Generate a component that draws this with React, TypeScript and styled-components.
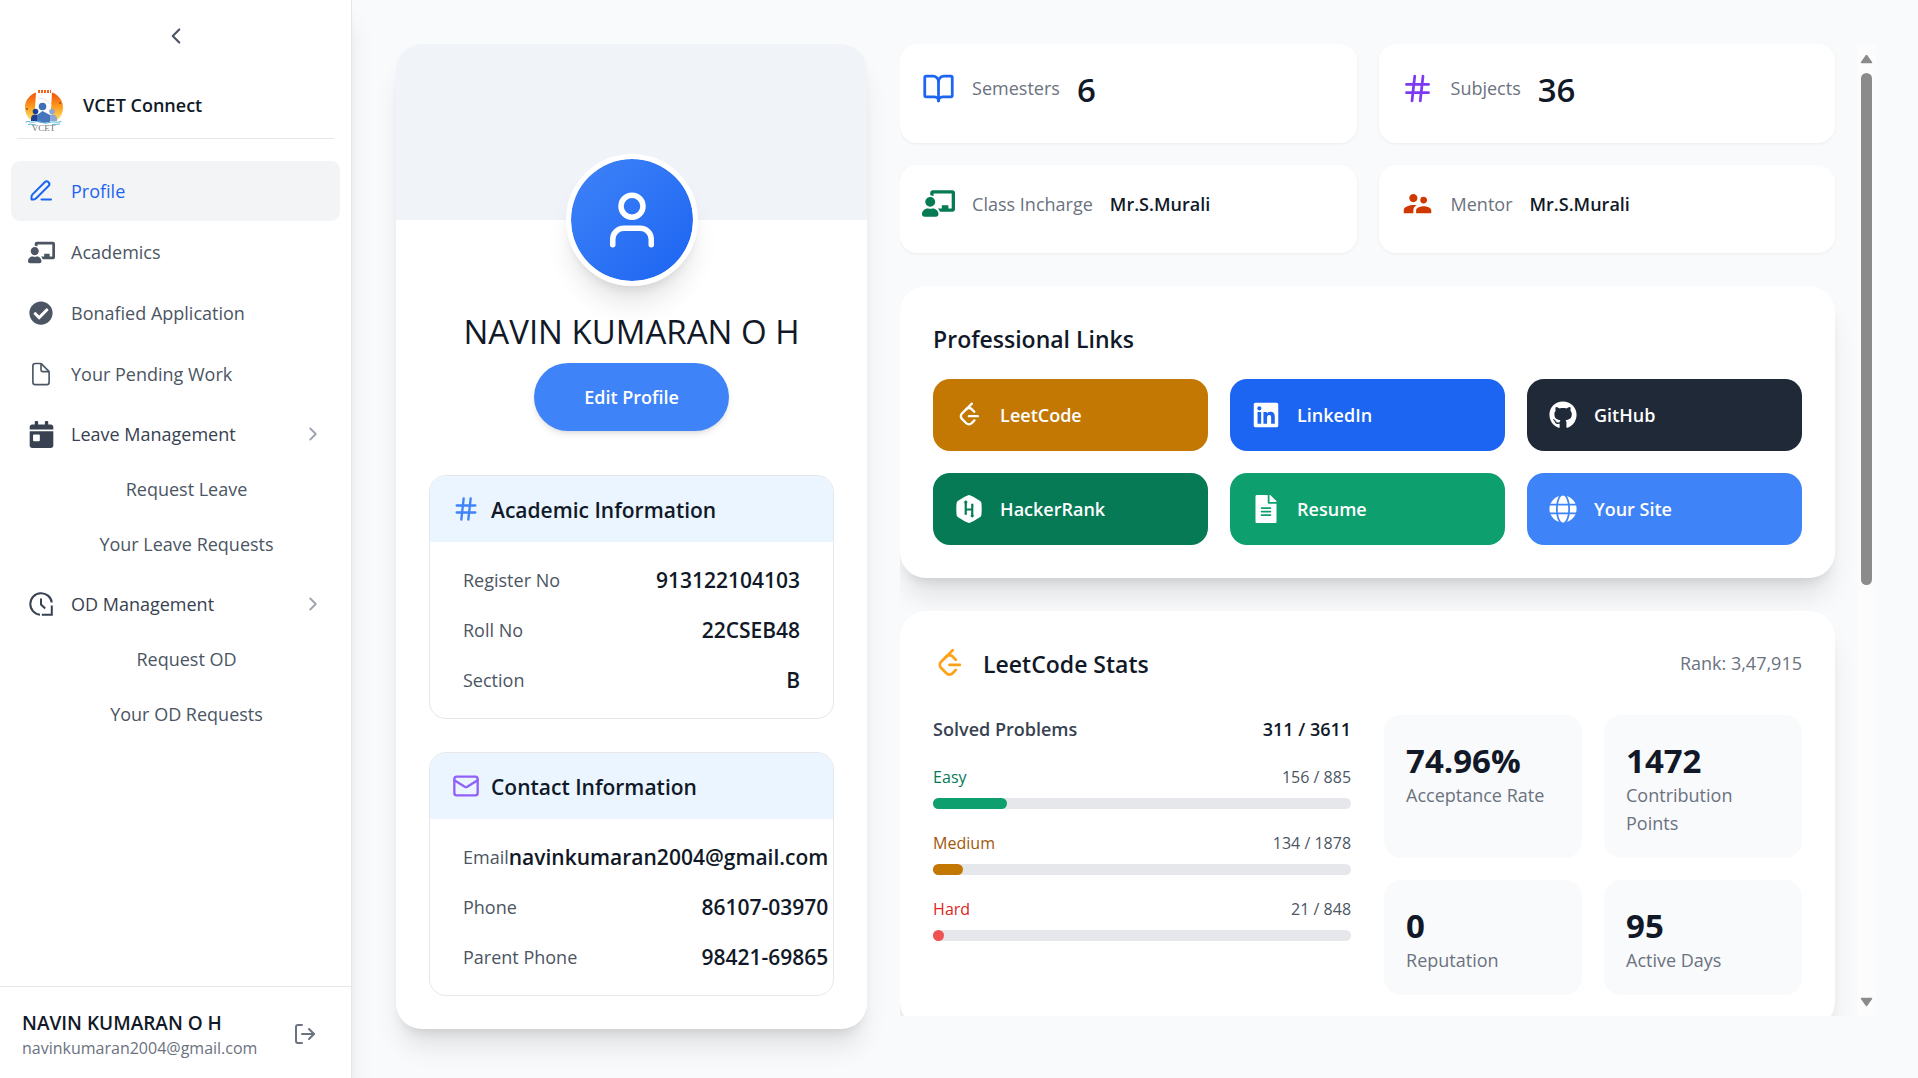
import React from "react";
import styled, { createGlobalStyle } from "styled-components";
import {
  BookOpen,
  ChevronLeft,
  ChevronRight,
  Hash,
  LogOut,
  Mail,
  User,
} from "lucide-react";
import {
  FaCalendarDay,
  FaChalkboardTeacher,
  FaCheckCircle,
  FaFileAlt,
  FaGithub,
  FaGlobe,
  FaHackerrank,
  FaLinkedin,
} from "react-icons/fa";
import { IoDocumentOutline } from "react-icons/io5";
import { MdSupervisorAccount } from "react-icons/md";
import { TbBrandLeetcode } from "react-icons/tb";

const color = {
  page: "#f9fafc",
  white: "#ffffff",
  banner: "#f0f4f9",
  ink: "#111928",
  gray700: "#374151",
  gray600: "#4b5563",
  gray500: "#6b7280",
  gray400: "#9ca3af",
  gray200: "#e5e7eb",
  gray100: "#f3f4f6",
  blue50: "#ebf5ff",
  blue500: "#3f83f8",
  blue600: "#1c64f2",
};

const shadow = {
  sm: "0 1px 3px rgba(0, 0, 0, 0.06)",
  md: "0 4px 7px -1px rgba(0, 0, 0, 0.1), 0 2px 4px -2px rgba(0, 0, 0, 0.1)",
  xl: "0 22px 27px -5px rgba(0, 0, 0, 0.1), 0 9px 11px -6px rgba(0, 0, 0, 0.1)",
};

const GlobalStyle = createGlobalStyle`
  *, *::before, *::after { box-sizing: border-box; }
  body {
    margin: 0;
    background: ${color.page};
    color: ${color.ink};
    font-family: "Segoe UI", "Open Sans", "Noto Sans", sans-serif;
    font-size: 18px;
    line-height: 28px;
  }
  h1, h2, h3, p, ul, dl, dd { margin: 0; padding: 0; }
  ul { list-style: none; }
  a { color: inherit; text-decoration: none; }
  button {
    border: 0;
    padding: 0;
    background: none;
    color: inherit;
    font: inherit;
    cursor: pointer;
  }
  svg { flex: none; display: block; }
`;

const Shell = styled.div`
  display: flex;
  height: 100vh;
  overflow: hidden;
`;

/* ---------- Sidebar ---------- */

const Sidebar = styled.aside`
  display: flex;
  flex-direction: column;
  flex: none;
  width: 352px;
  background: ${color.white};
  border-right: 1px solid ${color.gray200};
  box-shadow: ${shadow.xl};
`;

const CollapseButton = styled.button`
  align-self: center;
  margin: 23px 0 34px;
  color: ${color.gray600};
`;

const Brand = styled.div`
  display: flex;
  align-items: center;
  gap: 17px;
  height: 56px;
  margin: 0 17px;
  padding: 0 5px;
  border-bottom: 1px solid ${color.gray200};
`;

const BrandName = styled.span`
  padding-bottom: 12px;
  font-weight: 600;
`;

const Nav = styled.nav`
  flex: 1;
  padding: 22px 11px 0;
`;

const NavList = styled.ul`
  display: grid;
  gap: 1px;
`;

const NavIcon = styled.span`
  display: grid;
  place-items: center;
  flex: none;
  width: 26px;
  height: 26px;
`;

const NavLink = styled.a<{ $active?: boolean }>`
  display: flex;
  align-items: center;
  gap: 17px;
  height: 60px;
  padding: 0 17px;
  border-radius: 9px;
  background: ${(p) => (p.$active ? color.gray100 : "transparent")};
  color: ${(p) => (p.$active ? color.blue600 : color.gray600)};
`;

const GroupButton = styled.button`
  display: flex;
  align-items: center;
  gap: 17px;
  width: 100%;
  height: 60px;
  padding: 0 16px 0 17px;
  color: ${color.gray700};
  text-align: left;
`;

const GroupLabel = styled.span`
  flex: 1;
`;

const SubList = styled.ul`
  padding-left: 22px;
`;

const SubLink = styled.a`
  display: flex;
  align-items: center;
  justify-content: center;
  height: 50px;
  margin-bottom: 5px;
  color: ${color.gray600};
`;

const Account = styled.footer`
  display: flex;
  align-items: center;
  justify-content: space-between;
  height: 92px;
  padding: 2px 34px 0 22px;
  border-top: 1px solid ${color.gray200};
`;

const AccountText = styled.div`
  padding-top: 4px;
`;

const AccountName = styled.p`
  font-size: 19px;
  line-height: 25px;
  font-weight: 600;
`;

const AccountEmail = styled.p`
  font-size: 16px;
  line-height: 24px;
  color: ${color.gray500};
`;

const IconButton = styled.button`
  color: ${color.gray500};
`;

/* ---------- Main ---------- */

const Main = styled.main`
  display: grid;
  grid-template-columns: minmax(0, 14fr) minmax(0, 29fr);
  align-items: start;
  gap: 33px;
  flex: 1;
  min-width: 0;
  padding: 44px 42px 44px 44px;
`;

const Card = styled.section`
  background: ${color.white};
  border-radius: 26px;
  box-shadow: ${shadow.xl};
`;

const ProfileCard = styled(Card)`
  padding-bottom: 33px;
`;

const Banner = styled.div`
  height: 176px;
  border-radius: 26px 26px 0 0;
  background: ${color.banner};
`;

const Identity = styled.div`
  display: flex;
  flex-direction: column;
  align-items: center;
  margin-top: -66px;
`;

const Avatar = styled.div`
  display: grid;
  place-items: center;
  width: 132px;
  height: 132px;
  border: 5px solid ${color.white};
  border-radius: 50%;
  background: linear-gradient(135deg, ${color.blue500}, ${color.blue600}) padding-box;
  color: ${color.white};
  box-shadow: ${shadow.xl};
`;

const ProfileName = styled.h1`
  margin-top: 23px;
  font-size: 33px;
  line-height: 46px;
  font-weight: 400;
`;

const EditButton = styled.button`
  margin-top: 8px;
  padding: 20px 50px;
  border-radius: 34px;
  background: ${color.blue500};
  color: ${color.white};
  font-weight: 600;
  box-shadow: ${shadow.md};
`;

const InfoList = styled.div`
  display: grid;
  grid-template-columns: minmax(0, 1fr);
  gap: 33px;
  padding: 44px 33px 0;
`;

const InfoCard = styled.section`
  overflow: hidden;
  border: 1px solid ${color.gray200};
  border-radius: 17px;
`;

const InfoHeader = styled.header<{ $tint: string }>`
  display: flex;
  align-items: center;
  gap: 11px;
  height: 66px;
  padding: 0 22px;
  background: ${color.blue50};

  svg {
    color: ${(p) => p.$tint};
  }
`;

const InfoTitle = styled.h2`
  padding-top: 2px;
  font-size: 21px;
  font-weight: 600;
`;

const InfoRows = styled.dl`
  display: grid;
  gap: 17px;
  padding: 22px 33px 21px;
`;

const InfoRow = styled.div`
  display: flex;
  align-items: center;
  justify-content: space-between;
  line-height: 33px;
`;

const InfoTerm = styled.dt`
  color: ${color.gray600};
  white-space: nowrap;
`;

const InfoValue = styled.dd`
  font-size: 21px;
  font-weight: 600;
  white-space: nowrap;
`;

/* ---------- Scrolling column ---------- */

const ScrollArea = styled.div`
  display: flex;
  height: calc(100vh - 106px);
`;

const ScrollContent = styled.div`
  display: flex;
  flex-direction: column;
  gap: 33px;
  flex: 1;
  min-width: 0;
  padding-right: 22px;
  overflow-y: auto;
  scrollbar-width: none;

  > * {
    flex: none;
  }
`;

const ScrollTrack = styled.div`
  display: flex;
  flex-direction: column;
  align-items: center;
  justify-content: space-between;
  flex: none;
  width: 19px;
  padding: 10px 0 9px;
  background: #fcfcfc;
  color: #8b8b8b;
`;

const ScrollRail = styled.div`
  flex: 1;
  width: 11px;
  margin: 9px 0;
`;

const ScrollThumb = styled.div`
  height: 56%;
  border-radius: 6px;
  background: currentColor;
`;

const StatGrid = styled.div`
  display: grid;
  grid-template-columns: repeat(2, minmax(0, 1fr));
  gap: 22px;
`;

const StatCard = styled.section`
  padding: 22px 22px 33px;
  border-radius: 17px;
  background: ${color.white};
  box-shadow: ${shadow.sm};
`;

const StatLine = styled.div<{ $tall?: boolean }>`
  display: flex;
  align-items: center;
  gap: 17px;
  height: ${(p) => (p.$tall ? 44 : 33)}px;
`;

const StatLabel = styled.span`
  color: ${color.gray500};
`;

const StatValue = styled.strong<{ $large?: boolean }>`
  padding-top: ${(p) => (p.$large ? 3 : 0)}px;
  font-size: ${(p) => (p.$large ? 33 : 18)}px;
  font-weight: 600;
`;

const PaddedCard = styled(Card)`
  padding: 33px;
`;

const CardTitle = styled.h2`
  padding-top: 2px;
  font-size: 23px;
  line-height: 36px;
  font-weight: 600;
`;

const LinkGrid = styled.div`
  display: grid;
  grid-template-columns: repeat(3, minmax(0, 1fr));
  gap: 22px;
  padding-top: 22px;
`;

const LinkTile = styled.a<{ $fill: string }>`
  display: flex;
  align-items: center;
  gap: 17px;
  padding: 22px;
  border-radius: 17px;
  background: ${(p) => p.$fill};
  color: ${color.white};
  font-weight: 600;
`;

const LeetHeader = styled.header`
  display: flex;
  align-items: center;
  gap: 17px;
`;

const LeetTitle = styled(CardTitle)`
  flex: 1;
`;

const Rank = styled.span`
  color: ${color.gray500};
`;

const LeetBody = styled.div`
  display: grid;
  grid-template-columns: repeat(2, minmax(0, 1fr));
  gap: 33px;
  padding-top: 33px;
`;

const Solved = styled.div`
  display: flex;
  flex-direction: column;
  gap: 22px;
`;

const SplitLine = styled.div`
  display: flex;
  align-items: center;
  justify-content: space-between;
`;

const SolvedLine = styled(SplitLine)`
  color: ${color.gray700};
  font-weight: 600;
`;

const SolvedTotal = styled.span`
  color: ${color.ink};
`;

const LevelLine = styled(SplitLine)<{ $ink: string }>`
  margin-bottom: 9px;
  font-size: 16px;
  line-height: 24px;
  color: ${(p) => p.$ink};
`;

const LevelCount = styled.span`
  color: ${color.gray600};
`;

const Bar = styled.div`
  height: 11px;
  border-radius: 6px;
  background: ${color.gray200};
`;

const BarFill = styled.div<{ $fill: string }>`
  height: 100%;
  min-width: 11px;
  border-radius: 6px;
  background: ${(p) => p.$fill};
`;

const MetricGrid = styled.div`
  display: grid;
  grid-template-columns: repeat(2, minmax(0, 1fr));
  gap: 22px;
`;

const Metric = styled.div`
  padding: 26px 22px 21px;
  border-radius: 17px;
  background: ${color.page};
`;

const MetricValue = styled.p`
  font-size: 33px;
  line-height: 40px;
  font-weight: 700;
`;

const MetricLabel = styled.p`
  color: ${color.gray500};
`;

/* ---------- Drawings ---------- */

function PenIcon() {
  return (
    <svg
      width="26"
      height="26"
      viewBox="0 0 26 26"
      fill="none"
      stroke="currentColor"
      strokeWidth="2"
      strokeLinecap="round"
      strokeLinejoin="round"
      aria-hidden="true"
    >
      <path d="M3.500 21.500v-2.700c0-1 .300-1.700 1-2.400L16.700 4.200a2.650 2.650 0 0 1 3.800 3.800L8.200 20.300c-.700.700-1.500 1.200-2.500 1.200z" />
      <path d="M13.500 21.500h9.500" />
    </svg>
  );
}

function ClockCornerIcon() {
  return (
    <svg
      width="26"
      height="26"
      viewBox="0 0 26 26"
      fill="none"
      stroke="currentColor"
      strokeWidth="2"
      aria-hidden="true"
    >
      <path d="M23.800 11.500A10.800 10.800 0 1 0 12 23.700" />
      <path d="M23.800 14.500v9.200h-10" />
      <path d="M13 7.500v6l4.200 4" />
    </svg>
  );
}

function CollegeLogo() {
  return (
    <svg width="44" height="44" viewBox="0 0 44 44" role="img" aria-label="VCET">
      <defs>
        <linearGradient id="sun" x1="0" y1="0" x2="0" y2="1">
          <stop offset="0" stopColor="#f4510b" />
          <stop offset="0.5" stopColor="#fb9a1c" />
          <stop offset="1" stopColor="#ffe566" />
        </linearGradient>
      </defs>
      <path d="M14 3.500C7 6 3 12 3 18.500c0 5 2 9.500 6 13h4V19z" fill="url(#sun)" />
      <path d="M30 3.500c7 2.500 11 8.500 11 15 0 5-2 9.500-6 13h-4l-2-12z" fill="url(#sun)" />
      <path d="M16 2.500h13" stroke="#f4641f" strokeWidth="3" strokeDasharray="2 1" />
      <path d="M16 9c6 0 11 3 14 8" stroke="#d5d9e2" strokeWidth="0.700" fill="none" />
      <circle cx="5" cy="20" r="1" fill="#8a5a2a" />
      <circle cx="38" cy="14" r="1" fill="#8a5a2a" />
      <circle cx="13.500" cy="22.500" r="2.800" fill="#1c3f94" />
      <path d="M9 32v-2.500c0-2.500 1.500-4 4.500-4s5 1.500 5 4V32z" fill="#1c3f94" />
      <circle cx="30" cy="22.500" r="2.800" fill="#8ea6d6" />
      <path d="M25 32v-2.500c0-2.500 2-4 5-4s5 1.500 5 4V32z" fill="#8ea6d6" />
      <circle cx="20.500" cy="17.500" r="3.800" fill="#3f6fb8" />
      <path d="M15 33v-7l5.500-4 7.500 4v7l-7 1z" fill="#4674bd" />
      <path
        d="M3.500 33c3-1.500 6 1 9 0s5-1 8 .500 6 0 9-.500 6 1 10-.500M6 35.500c3-1 5 .500 8 .500M30 35.500c3 0 5-.500 8-.500"
        stroke="#56b4cf"
        strokeWidth="1"
        fill="none"
      />
      <text
        x="21.500"
        y="41.500"
        textAnchor="middle"
        fontFamily="Liberation Serif, serif"
        fontSize="9"
        fill="#6f6f73"
      >
        VCET
      </text>
    </svg>
  );
}

function ScrollArrow({ down = false }: { down?: boolean }) {
  return (
    <svg width="13" height="10" viewBox="0 0 13 10" aria-hidden="true">
      <path
        d={down ? "M1.500 1.500h10L6.500 8.500z" : "M1.500 8.500h10L6.500 1.500z"}
        fill="currentColor"
        stroke="currentColor"
        strokeWidth="1.500"
        strokeLinejoin="round"
      />
    </svg>
  );
}

/* ---------- Data ---------- */

const navItems = [
  { label: "Profile", icon: <PenIcon />, active: true },
  { label: "Academics", icon: <FaChalkboardTeacher size={27} /> },
  { label: "Bonafied Application", icon: <FaCheckCircle size={24} /> },
  { label: "Your Pending Work", icon: <IoDocumentOutline size={26} /> },
];

const navGroups = [
  {
    label: "Leave Management",
    icon: <FaCalendarDay size={27} />,
    children: ["Request Leave", "Your Leave Requests"],
  },
  {
    label: "OD Management",
    icon: <ClockCornerIcon />,
    children: ["Request OD", "Your OD Requests"],
  },
];

const infoCards = [
  {
    title: "Academic Information",
    icon: <Hash size={28} />,
    tint: color.blue500,
    rows: [
      ["Register No", "913122104103"],
      ["Roll No", "22CSEB48"],
      ["Section", "B"],
    ],
  },
  {
    title: "Contact Information",
    icon: <Mail size={28} />,
    tint: "#9061f9",
    rows: [
      ["Email", "navinkumaran2004@gmail.com"],
      ["Phone", "86107-03970"],
      ["Parent Phone", "98421-69865"],
    ],
  },
];

const stats = [
  { label: "Semesters", value: "6", large: true, icon: <BookOpen size={33} color="#1c64f2" /> },
  { label: "Subjects", value: "36", large: true, icon: <Hash size={33} color="#7e3af2" /> },
  { label: "Class Incharge", value: "Mr.S.Murali", icon: <FaChalkboardTeacher size={33} color="#057a55" /> },
  { label: "Mentor", value: "Mr.S.Murali", icon: <MdSupervisorAccount size={33} color="#d03801" /> },
];

const links = [
  { label: "LeetCode", fill: "#c27803", icon: <TbBrandLeetcode size={28} /> },
  { label: "LinkedIn", fill: "#1c64f2", icon: <FaLinkedin size={28} /> },
  { label: "GitHub", fill: "#1f2937", icon: <FaGithub size={28} /> },
  { label: "HackerRank", fill: "#057a55", icon: <FaHackerrank size={28} /> },
  { label: "Resume", fill: "#0e9f6e", icon: <FaFileAlt size={28} /> },
  { label: "Your Site", fill: "#3f83f8", icon: <FaGlobe size={28} /> },
];

const levels = [
  { label: "Easy", done: 156, total: 885, ink: "#057a55", fill: "#0e9f6e" },
  { label: "Medium", done: 134, total: 1878, ink: "#9f580a", fill: "#c27803" },
  { label: "Hard", done: 21, total: 848, ink: "#e02424", fill: "#f05252" },
];

const metrics = [
  ["74.96%", "Acceptance Rate"],
  ["1472", "Contribution Points"],
  ["0", "Reputation"],
  ["95", "Active Days"],
];

export default function App() {
  return (
    <Shell>
      <GlobalStyle />
      <Sidebar>
        <CollapseButton type="button" aria-label="Collapse sidebar">
          <ChevronLeft size={26} />
        </CollapseButton>
        <Brand>
          <CollegeLogo />
          <BrandName>VCET Connect</BrandName>
        </Brand>
        <Nav>
          <NavList>
            {navItems.map((item) => (
              <li key={item.label}>
                <NavLink href="#" $active={item.active}>
                  <NavIcon>{item.icon}</NavIcon>
                  {item.label}
                </NavLink>
              </li>
            ))}
          </NavList>
          <ul>
            {navGroups.map((group) => (
              <li key={group.label}>
                <GroupButton type="button" aria-expanded="true">
                  <NavIcon>{group.icon}</NavIcon>
                  <GroupLabel>{group.label}</GroupLabel>
                  <ChevronRight size={22} color={color.gray400} />
                </GroupButton>
                <SubList>
                  {group.children.map((child) => (
                    <li key={child}>
                      <SubLink href="#">{child}</SubLink>
                    </li>
                  ))}
                </SubList>
              </li>
            ))}
          </ul>
        </Nav>
        <Account>
          <AccountText>
            <AccountName>NAVIN KUMARAN O H</AccountName>
            <AccountEmail>navinkumaran2004@gmail.com</AccountEmail>
          </AccountText>
          <IconButton type="button" aria-label="Log out">
            <LogOut size={24} />
          </IconButton>
        </Account>
      </Sidebar>

      <Main>
        <ProfileCard>
          <Banner />
          <Identity>
            <Avatar>
              <User size={66} />
            </Avatar>
            <ProfileName>NAVIN KUMARAN O H</ProfileName>
            <EditButton type="button">Edit Profile</EditButton>
          </Identity>
          <InfoList>
            {infoCards.map((card) => (
              <InfoCard key={card.title}>
                <InfoHeader $tint={card.tint}>
                  {card.icon}
                  <InfoTitle>{card.title}</InfoTitle>
                </InfoHeader>
                <InfoRows>
                  {card.rows.map(([term, value]) => (
                    <InfoRow key={term}>
                      <InfoTerm>{term}</InfoTerm>
                      <InfoValue>{value}</InfoValue>
                    </InfoRow>
                  ))}
                </InfoRows>
              </InfoCard>
            ))}
          </InfoList>
        </ProfileCard>

        <ScrollArea>
          <ScrollContent>
            <StatGrid>
              {stats.map((stat) => (
                <StatCard key={stat.label}>
                  <StatLine $tall={stat.large}>
                    {stat.icon}
                    <StatLabel>{stat.label}</StatLabel>
                    <StatValue $large={stat.large}>{stat.value}</StatValue>
                  </StatLine>
                </StatCard>
              ))}
            </StatGrid>

            <PaddedCard>
              <CardTitle>Professional Links</CardTitle>
              <LinkGrid>
                {links.map((link) => (
                  <LinkTile key={link.label} href="#" $fill={link.fill}>
                    {link.icon}
                    {link.label}
                  </LinkTile>
                ))}
              </LinkGrid>
            </PaddedCard>

            <PaddedCard>
              <LeetHeader>
                <TbBrandLeetcode size={33} color="#ffa116" />
                <LeetTitle>LeetCode Stats</LeetTitle>
                <Rank>Rank: 3,47,915</Rank>
              </LeetHeader>
              <LeetBody>
                <Solved>
                  <SolvedLine>
                    <span>Solved Problems</span>
                    <SolvedTotal>311 / 3611</SolvedTotal>
                  </SolvedLine>
                  {levels.map((level) => (
                    <div key={level.label}>
                      <LevelLine $ink={level.ink}>
                        <span>{level.label}</span>
                        <LevelCount>
                          {level.done} / {level.total}
                        </LevelCount>
                      </LevelLine>
                      <Bar>
                        <BarFill
                          $fill={level.fill}
                          style={{ width: `${(level.done / level.total) * 100}%` }}
                        />
                      </Bar>
                    </div>
                  ))}
                </Solved>
                <MetricGrid>
                  {metrics.map(([value, label]) => (
                    <Metric key={label}>
                      <MetricValue>{value}</MetricValue>
                      <MetricLabel>{label}</MetricLabel>
                    </Metric>
                  ))}
                </MetricGrid>
              </LeetBody>
            </PaddedCard>
          </ScrollContent>
          <ScrollTrack aria-hidden="true">
            <ScrollArrow />
            <ScrollRail>
              <ScrollThumb />
            </ScrollRail>
            <ScrollArrow down />
          </ScrollTrack>
        </ScrollArea>
      </Main>
    </Shell>
  );
}
